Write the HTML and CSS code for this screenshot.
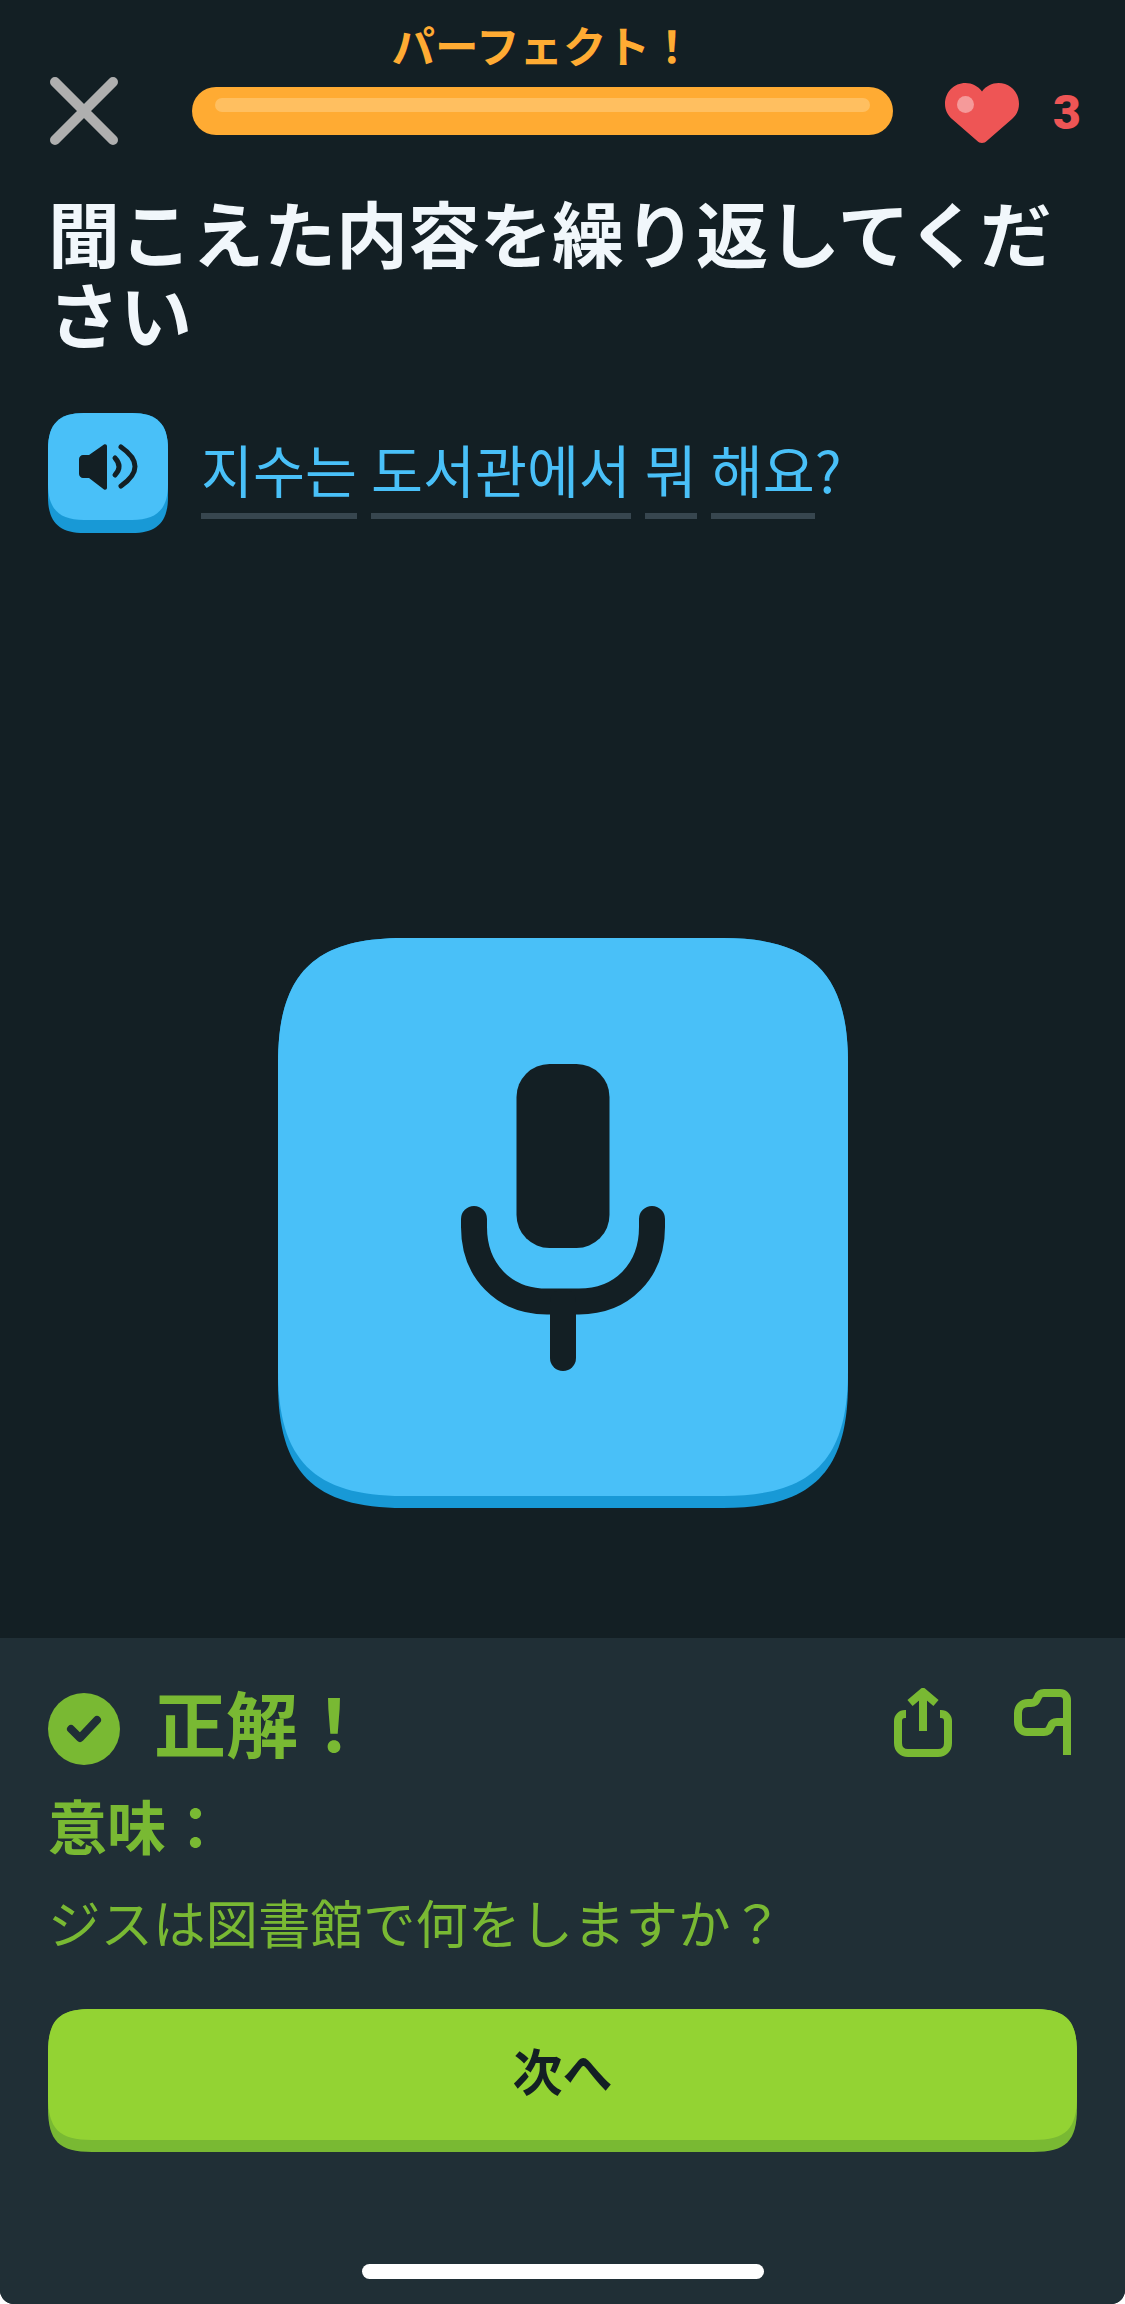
FILE: index.html
```html
<!DOCTYPE html>
<html lang="ja">
<head>
<meta charset="utf-8">
<title>Lesson</title>
<link rel="stylesheet" href="styles.css">
</head>
<body>
<main class="screen">
  <section class="lesson">
    <header class="topbar">
      <svg class="close" viewBox="0 0 68 68" aria-hidden="true"><path d="M5 5 L63 63 M63 5 L5 63"/></svg>
      <div class="progress">
        <div class="streak">パーフェクト！</div>
        <div class="track"><div class="shine"></div></div>
      </div>
      <div class="hearts">
        <svg class="heart" viewBox="0 0 74 60" aria-hidden="true">
          <path class="heart-body" d="M37 60c-2 0-3.500-1-5-2.300L7 36C2.500 32 0 27 0 21 0 9 9 0 20.500 0 27 0 33 3 37 8.500 41 3 47 0 53.500 0 65 0 74 9 74 21c0 6-2.500 11-7 15L42 57.700C40.500 59 39 60 37 60z"/>
          <circle class="heart-dot" cx="20.500" cy="21.500" r="8.500"/>
        </svg>
        <span class="heart-count">3</span>
      </div>
    </header>

    <h1 class="title">聞こえた内容を繰り返してください</h1>

    <div class="prompt">
      <button class="speaker" type="button" aria-label="play">
        <span class="speaker-face">
          <svg viewBox="0 0 58 46" aria-hidden="true">
            <path class="fill" d="M4 11h6L25 .6C26.500-.3 28 .5 28 2.500v41c0 2-1.500 2.800-3 1.900L10 34H4c-2 0-4-2-4-4V15c0-2 2-4 4-4z"/>
            <path class="wave" d="M36 14Q44 22.500 36 31"/>
            <path class="wave" d="M42 3Q70 22.500 42 42"/>
          </svg>
        </span>
      </button>
      <div class="sentence">
        <span class="word">지수는</span>
        <span class="word">도서관에서</span>
        <span class="word">뭐</span>
        <span class="word">해요</span><span class="mark">?</span>
      </div>
    </div>

    <div class="mic-wrap">
      <button class="mic" type="button" aria-label="record">
        <span class="mic-face">
          <svg viewBox="0 0 204 307" aria-hidden="true">
            <rect class="fill" x="55.500" y="0" width="93" height="184" rx="33"/>
            <path class="mic-line" d="M13 155v8c0 44 30 74.500 73 74.500h32c43 0 73-30.500 73-74.500v-8"/>
            <path class="mic-line" d="M102 238v56"/>
          </svg>
        </span>
      </button>
    </div>
  </section>

  <footer class="result">
    <div class="result-head">
      <div class="check">
        <svg viewBox="0 0 36 28" aria-hidden="true"><path d="M5 14l9 9L31 5"/></svg>
      </div>
      <div class="result-title">正解！</div>
      <div class="actions">
        <svg class="share" viewBox="0 0 58 69" aria-hidden="true">
          <path d="M29 43V4M16 15L29 4l13 11M12 26h-1c-4 0-7 3-7 7v22c0 6 4 10 10 10h30c6 0 10-4 10-10V33c0-4-3-7-7-7h-1"/>
        </svg>
        <svg class="flag" viewBox="0 0 57 66" aria-hidden="true">
          <path d="M53 66V11c0-4-3-7-7-7H30c-3 0-5 1-6 4l-1 2c-1 3-3 4-6 4h-3C8 14 4 18 4 24v9c0 6 4 10 9 10h17c3 0 5-1 6-4l1-2c1-3 3-4 6-4h10"/>
        </svg>
      </div>
    </div>
    <div class="meaning-label">意味：</div>
    <div class="meaning">ジスは図書館で何をしますか？</div>
    <button class="next" type="button"><span class="next-face">次へ</span></button>
    <div class="home"></div>
  </footer>
</main>
</body>
</html>
```
FILE: styles.css
```css
* { box-sizing: border-box; }
html, body { margin: 0; padding: 0; background: #ffffff; }
body { width: 1125px; height: 2304px; overflow: hidden; }

.screen {
  width: 1125px;
  height: 2304px;
  display: flex;
  flex-direction: column;
  border-radius: 0 0 14px 14px;
  overflow: hidden;
  background: #131f24;
  font-family: "Noto Sans CJK JP", "Noto Sans", sans-serif;
}

.lesson { height: 1638px; display: flex; flex-direction: column; padding: 0 48px; }

.topbar { display: flex; align-items: flex-start; height: 190px; }
.close { width: 68px; height: 68px; margin: 77px 0 0 2px; flex: none; }
.close path { fill: none; stroke: #afafaf; stroke-width: 10; stroke-linecap: round; }

.progress { width: 701px; margin-left: 74px; flex: none; display: flex; flex-direction: column; align-items: center; }
.streak { height: 87px; font-size: 43.500px; line-height: 90px; font-weight: 700; color: #ffab33; white-space: nowrap; }
.track { width: 100%; height: 48px; border-radius: 24px; background: #ffab33; padding: 11px 23px 0; }
.shine { height: 14px; border-radius: 7px; background: #ffbf60; }

.hearts { display: flex; align-items: center; margin: 83px 0 0 52px; }
.heart { width: 74px; height: 60px; flex: none; }
.heart-body { fill: #ee5555; }
.heart-dot { fill: #f59a9a; }
.heart-count { margin-left: 34px; font-family: "Roboto", sans-serif; font-weight: 900; font-size: 48px; line-height: 60px; color: #ee5555; }

.title { margin: 0; font-size: 72px; line-height: 81px; font-weight: 700; color: #f1f7fb; width: 1029px; }

.prompt { display: flex; align-items: flex-start; margin-top: 61px; }
.speaker {
  width: 120px; height: 120px; flex: none; border: 0; padding: 0; display: flex; align-items: flex-start; background: #1899d6;
  clip-path: path("M0 36C0 11 11 0 36 0H84C109 0 120 11 120 36V84C120 109 109 120 84 120H36C11 120 0 109 0 84Z");
}
.speaker-face {
  display: flex; align-items: center; justify-content: center; flex: none;
  width: 120px; height: 120px; margin-top: -13px; padding-top: 13px; background: #49c0f8;
  clip-path: path("M0 36C0 11 11 0 36 0H84C109 0 120 11 120 36V84C120 109 109 120 84 120H36C11 120 0 109 0 84Z");
}
.speaker svg { width: 58px; height: 46px; overflow: visible; }
.fill { fill: #131f24; }
.wave { fill: none; stroke: #131f24; stroke-width: 5; stroke-linecap: round; }

.sentence { display: flex; align-items: flex-start; margin: 17px 0 0 33px; font-family: "Noto Sans CJK KR", "Noto Sans", sans-serif; font-size: 56.500px; line-height: 76px; color: #49c0f8; }
.word { display: block; height: 89px; margin-right: 14px; border-bottom: 6px solid #37464f; }
.mark { margin-left: -14px; }

.mic-wrap { flex: 1; display: flex; justify-content: center; align-items: flex-start; padding-top: 405px; }
.mic {
  width: 570px; height: 570px; border: 0; padding: 0; display: flex; align-items: flex-start; background: #1899d6; margin-left: 1px;
  clip-path: path("M0 125C0 36 36 0 125 0H445C534 0 570 36 570 125V445C570 534 534 570 445 570H125C36 570 0 534 0 445Z");
}
.mic-face {
  display: flex; align-items: center; justify-content: center; flex: none;
  width: 570px; height: 570px; margin-top: -12px; padding-top: 12px; background: #49c0f8;
  clip-path: path("M0 125C0 36 36 0 125 0H445C534 0 570 36 570 125V445C570 534 534 570 445 570H125C36 570 0 534 0 445Z");
}
.mic svg { width: 204px; height: 307px; }
.mic-line { fill: none; stroke: #131f24; stroke-width: 26; stroke-linecap: round; }

.result { flex: 1; background: #202f36; padding: 55px 48px 0; display: flex; flex-direction: column; }
.result-head { display: flex; align-items: center; height: 72px; }
.check { width: 72px; height: 72px; border-radius: 50%; background: #79b933; display: flex; align-items: center; justify-content: center; flex: none; }
.check svg { width: 36px; height: 28px; }
.check path { fill: none; stroke: #202f36; stroke-width: 8; stroke-linecap: round; stroke-linejoin: round; }
.result-title { margin: 0 0 16px 34px; font-size: 72px; font-weight: 700; line-height: 72px; color: #79b933; }
.actions { margin: 0 6px 14px auto; display: flex; align-items: center; gap: 62px; flex: none; }
.share { width: 58px; height: 69px; flex: none; }
.flag { width: 57px; height: 66px; flex: none; }
.actions path { fill: none; stroke: #79b933; stroke-width: 8; stroke-linejoin: round; stroke-linecap: butt; }

.meaning-label { margin-top: 20px; font-size: 59px; line-height: 80px; font-weight: 700; color: #79b933; }
.meaning { margin-top: 16px; font-size: 52.500px; line-height: 80px; color: #79b933; white-space: nowrap; }

.next {
  margin-top: 48px; width: 1029px; height: 143px; flex: none; border: 0; padding: 0; display: flex; align-items: flex-start; background: #79b933;
  font-family: inherit; font-size: 50px; font-weight: 700; color: #131f24;
  clip-path: path("M0 44C0 11 11 0 44 0H985C1018 0 1029 11 1029 44V99C1029 132 1018 143 985 143H44C11 143 0 132 0 99Z");
}
.next-face {
  display: flex; align-items: center; justify-content: center; flex: none;
  width: 1029px; height: 143px; margin-top: -12px; background: #93d333;
  clip-path: path("M0 44C0 11 11 0 44 0H985C1018 0 1029 11 1029 44V99C1029 132 1018 143 985 143H44C11 143 0 132 0 99Z");
}
.home { width: 402px; height: 15px; border-radius: 8px; background: #ffffff; margin: 112px auto 0; }
```
